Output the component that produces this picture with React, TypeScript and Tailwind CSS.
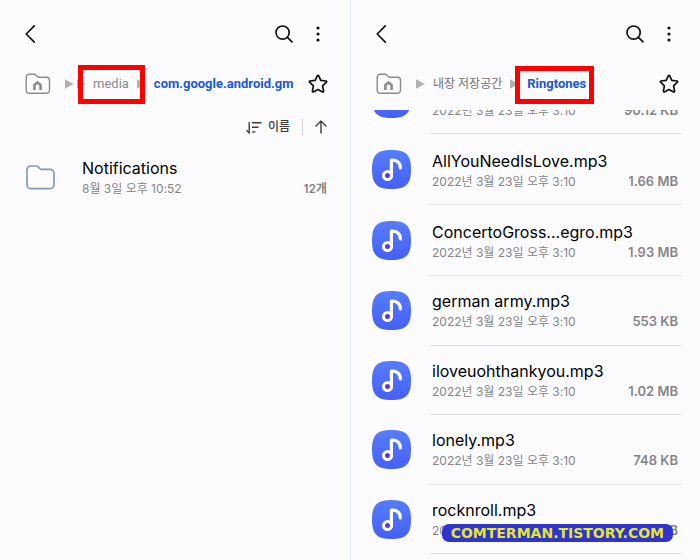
import type { ReactNode } from 'react';

interface AudioFile {
  name: string;
  size: string;
  tall?: boolean;
}

const MODIFIED = '2022년 3월 23일 오후 3:10';

const files: AudioFile[] = [
  { name: 'AllYouNeedIsLove.mp3', size: '1.66 MB', tall: true },
  { name: 'ConcertoGross...egro.mp3', size: '1.93 MB', tall: true },
  { name: 'german army.mp3', size: '553 KB' },
  { name: 'iloveuohthankyou.mp3', size: '1.02 MB' },
  { name: 'lonely.mp3', size: '748 KB' },
  { name: 'rocknroll.mp3', size: '1.12 MB' },
];

function BackIcon() {
  return (
    <svg width="12" height="20" viewBox="0 0 12 20" fill="none" stroke="#111" strokeWidth="1.7" strokeLinecap="round" strokeLinejoin="round">
      <path d="M9.3 1.8 1.2 10l8.1 8.2" />
    </svg>
  );
}

function SearchIcon() {
  return (
    <svg width="18" height="18" viewBox="0 0 18 18" fill="none" stroke="#111" strokeWidth="1.7" strokeLinecap="round">
      <circle cx="7.6" cy="7.6" r="6.6" />
      <path d="m12.4 12.4 4.6 4.4" />
    </svg>
  );
}

function MoreIcon() {
  return (
    <svg width="4" height="18" viewBox="0 0 4 18" fill="#111">
      <circle cx="2" cy="3" r="1.6" />
      <circle cx="2" cy="9" r="1.6" />
      <circle cx="2" cy="15" r="1.6" />
    </svg>
  );
}

function HomeFolderIcon() {
  return (
    <svg width="26" height="22" viewBox="0 0 26 22" fill="none">
      <path d="M1.2 4.4A3 3 0 0 1 4.2 1.3h4.6c1 0 1.8.4 2.4 1.1l1 1.2c.3.4.8.6 1.3.6h8a3 3 0 0 1 3 3v10.1a3 3 0 0 1-3 3H4.2a3 3 0 0 1-3-3Z" stroke="#8b8b8d" strokeWidth="1.4" />
      <path d="M9.400 17v-4.900l3.100-2.700 3.100 2.700V17" stroke="#8b8b8d" strokeWidth="2.600" strokeLinejoin="round" />
    </svg>
  );
}

function StarIcon() {
  return (
    <svg width="20" height="20" viewBox="0 0 20 20" fill="none" stroke="#111" strokeWidth="1.7" strokeLinejoin="round">
      <path d="M9.4 1.6a.7.7 0 0 1 1.200 0l2.200 4.800 5.200.6c.7.1.9.8.4 1.200l-3.800 3.700 1 5.300c.1.6-.5 1-1 .7L10 15.400l-4.600 2.500c-.5.3-1.100-.1-1-.7l1-5.300-3.800-3.700c-.5-.4-.3-1.100.4-1.200l5.200-.6Z" />
    </svg>
  );
}

function Crumb() {
  return (
    <svg className="shrink-0" width="9" height="10" viewBox="0 0 9 10" fill="#b0b0b2">
      <path d="M0 .3 8.700 5 0 9.700Z" />
    </svg>
  );
}

function SortIcon() {
  return (
    <svg width="16" height="13" viewBox="0 0 16 13" fill="none" stroke="#3c3c3e" strokeWidth="1.400">
      <path d="M3.200 1v10.800L.5 9.300M6 1.700h9.500M6 6.300h6.500M6 10.900h3.500" />
    </svg>
  );
}

function ArrowUpIcon() {
  return (
    <svg width="12" height="14" viewBox="0 0 12 14" fill="none" stroke="#3c3c3e" strokeWidth="1.400" strokeLinecap="round" strokeLinejoin="round">
      <path d="M6 13V1M1 6l5-5 5 5" />
    </svg>
  );
}

function FolderIcon() {
  return (
    <svg width="29" height="25" viewBox="0 0 29 25" fill="none" stroke="#8199bb" strokeWidth="1.700">
      <path d="M1 4.700A3.600 3.600 0 0 1 4.600 1h5.200c1.100 0 2 .4 2.700 1.200l1.300 1.400c.5.5 1.100.8 1.800.8h8.600A3.800 3.800 0 0 1 28 8.200v11.600a3.800 3.800 0 0 1-3.800 3.800H4.800A3.800 3.800 0 0 1 1 19.800Z" />
    </svg>
  );
}

function MusicIcon() {
  return (
    <svg className="shrink-0" width="39" height="39" viewBox="0 0 39 39">
      <defs>
        <linearGradient id="tile" x1="0" y1="0" x2="0" y2="1">
          <stop offset="0" stopColor="#567dfb" />
          <stop offset="1" stopColor="#4560f6" />
        </linearGradient>
      </defs>
      <path d="M19.500 0C34 0 39 5 39 19.500S34 39 19.500 39 0 34 0 19.500 5 0 19.500 0Z" fill="url(#tile)" />
      <path d="M19.400 26V10.200c5.500-.4 9.200 2.600 8.900 7.700" fill="none" stroke="#fff" strokeWidth="3.200" strokeLinecap="round" strokeLinejoin="round" />
      <circle cx="15.500" cy="25.600" r="4" fill="#6534d8" stroke="#fff" strokeWidth="3" />
    </svg>
  );
}

function TopBar() {
  return (
    <header className="flex h-[67px] items-center">
      <button type="button" aria-label="뒤로">
        <BackIcon />
      </button>
      <button type="button" aria-label="검색" className="ml-auto">
        <SearchIcon />
      </button>
      <button type="button" aria-label="더보기" className="mr-[7px] ml-[23px]">
        <MoreIcon />
      </button>
    </header>
  );
}

function PathBar({ children }: { children: ReactNode }) {
  return (
    <nav className="-mr-px mb-[9px] flex h-[34px] items-center font-[Roboto,'Noto_Sans_CJK_KR',sans-serif] text-[13px] whitespace-nowrap">
      <a href="#home" aria-label="홈" className="mr-[14px] shrink-0">
        <HomeFolderIcon />
      </a>
      {children}
      <button type="button" aria-label="즐겨찾기" className="ml-auto shrink-0">
        <StarIcon />
      </button>
    </nav>
  );
}

function FileRow({ file }: { file: AudioFile }) {
  return (
    <li className={file.tall ? 'flex h-[71px] shrink-0' : 'flex h-[70px] shrink-0 last:h-[69px] nth-4:h-[69px]'}>
      <div className={file.tall ? 'mr-[18px] pt-4' : 'mr-[18px] pt-[15px]'}>
        <MusicIcon />
      </div>
      <div
        className={`flex flex-1 items-start border-b border-[#e2e3e8] pr-1 pl-[3px] ${
          file.tall ? 'pt-[17px]' : 'pt-[15px]'
        }`}
      >
        <div className="w-0 flex-1 whitespace-nowrap">
          <p className="text-[16px] leading-[20px] text-black">{file.name}</p>
          <p className="text-[12px] leading-[22px] text-[#858587]">{MODIFIED}</p>
        </div>
        <span className="mt-[20px] text-[13px] leading-[20px] font-semibold whitespace-nowrap text-[#858587]">{file.size}</span>
      </div>
    </li>
  );
}

export default function App() {
  return (
    <main className="relative grid h-screen grid-cols-2 overflow-hidden bg-[#fcfcff] font-[Inter,'Noto_Sans_CJK_KR',sans-serif]">
      <section className="pr-[23px] pl-[25px]">
        <TopBar />
        <PathBar>
          <Crumb />
          <span className="ml-[3px]">
            <Crumb />
          </span>
          <a href="#media" className="relative ml-[7px] text-[#8a8a8c]">
            media
            <span className="absolute -top-[9px] -right-[16px] -bottom-[10px] -left-[15px] border-[5px] border-[#fe0000]" />
          </a>
          <span className="ml-[8px]">
            <Crumb />
          </span>
          <a href="#gm" className="ml-[8px] font-bold text-[#1a56d8]">
            com.google.android.gm
          </a>
        </PathBar>

        <div className="flex h-[34px] items-center justify-end">
          <button type="button" className="flex items-center gap-[6px] text-[12px] font-medium text-[#3c3c3e]">
            <SortIcon />
            이름
          </button>
          <span className="mr-[12px] ml-[12px] h-4 w-px bg-[#d0d0d4]" />
          <button type="button" aria-label="오름차순">
            <ArrowUpIcon />
          </button>
        </div>

        <ul>
          <li className="flex pt-[14px]">
            <div className="mr-[27px] ml-px pt-[7px]">
              <FolderIcon />
            </div>
            <div className="flex-1">
              <p className="text-[16px] leading-[20px] text-black">Notifications</p>
              <p className="text-[12px] leading-[22px] text-[#858587]">8월 3일 오후 10:52</p>
            </div>
            <span className="mt-[21px] text-[12px] leading-[20px] font-semibold text-[#858587]">12개</span>
          </li>
        </ul>
      </section>

      <section className="border-l border-[#e3eaf6]">
        <div className="pr-[22px] pl-[25px]">
          <TopBar />
          <PathBar>
            <Crumb />
            <a href="#storage" className="ml-[8px] text-[12px] text-[#6f6f71]">
              내장 저장공간
            </a>
            <span className="ml-[8px]">
              <Crumb />
            </span>
            <a href="#ringtones" className="relative ml-[8px] font-bold text-[#1a56d8]">
              Ringtones
              <span className="absolute -top-[8px] -right-[8px] -bottom-[10px] -left-[12px] border-[5px] border-[#fe0000]" />
            </a>
          </PathBar>
        </div>

        <div className="pr-[18px] pl-[21px]">
          {/* the row that is scrolled half out under the path bar */}
          <ul className="flex h-6 flex-col justify-end overflow-hidden">
            <FileRow file={{ name: 'Alarm.mp3', size: '90.12 KB', tall: true }} />
          </ul>
          <ul>
            {files.map((file) => (
              <FileRow key={file.name} file={file} />
            ))}
          </ul>
        </div>
      </section>

      <p className="absolute right-[27px] bottom-[18px] rounded-[7px] bg-[#2f35cc] px-[9px] font-['DejaVu_Sans',sans-serif] text-[14px] leading-[18px] font-bold text-[#e6e62e]">
        COMTERMAN.TISTORY.COM
      </p>
    </main>
  );
}
